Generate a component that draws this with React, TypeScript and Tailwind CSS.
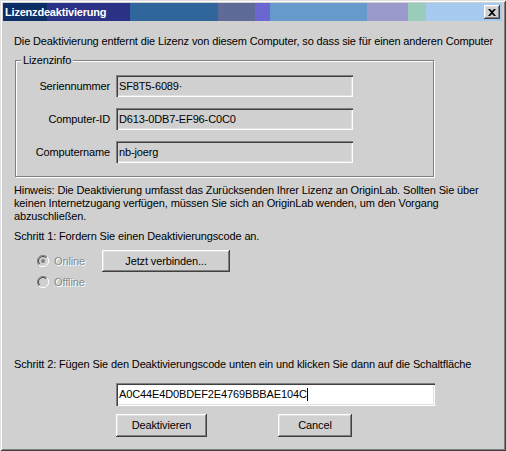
import React from 'react';

const face = 'bg-[#d0d0d0]';
const raised =
  'shadow-[inset_-1px_-1px_0_#404040,inset_1px_1px_0_#ffffff,inset_-2px_-2px_0_#808080,inset_2px_2px_0_#e0e0e0]';
const sunken =
  'shadow-[inset_1px_1px_0_#808080,inset_2px_2px_0_#404040,inset_-1px_-1px_0_#ffffff,inset_-2px_-2px_0_#e0e0e0]';

function Radio({ checked }: { checked?: boolean }) {
  return (
    <svg width="12" height="12" viewBox="0 0 12 12" className="shrink-0">
      <circle cx="6" cy="6" r="5.5" fill="#d0d0d0" />
      <path d="M10 2 A5.5 5.5 0 0 0 2 10" stroke="#808080" strokeWidth="1" fill="none" />
      <path d="M9.2 2.8 A4.5 4.5 0 0 0 2.8 9.2" stroke="#404040" strokeWidth="1" fill="none" />
      <path d="M2 10 A5.5 5.5 0 0 0 10 2" stroke="#ffffff" strokeWidth="1" fill="none" />
      {checked && <circle cx="6" cy="6" r="2" fill="#808080" />}
    </svg>
  );
}

function Field({ label, value }: { label: string; value: string }) {
  return (
    <div className="flex items-center h-[22px]">
      <div className="w-[94px] text-right">{label}</div>
      <div className={`ml-[6px] w-[237px] h-[22px] flex items-center pl-[3px] ${sunken}`}>{value}</div>
    </div>
  );
}

export default function App() {
  return (
    <div
      className={`w-[506px] h-[451px] ${face} pl-[3px] pt-[3px] pr-[4px] pb-[3px] flex flex-col text-[11px] leading-[13px] tracking-[-0.13px] text-black shadow-[inset_1px_1px_0_#e0e0e0,inset_-1px_-1px_0_#404040,inset_2px_2px_0_#ffffff,inset_-2px_-2px_0_#808080]`}
      style={{ fontFamily: '"Liberation Sans", Arial, sans-serif' }}
    >
      {/* title bar */}
      <div className="h-[18px] shrink-0 flex items-center justify-between bg-[linear-gradient(to_right,#0d2d66_0_44px,#2b3184_44px_127px,#30669b_127px_215px,#5f6a98_215px_252px,#6a68d0_252px_267px,#6699cc_267px_364px,#9a99cb_364px_405px,#99ccbb_405px_423px,#a6caf0_423px)]">
        <span className="pl-[2px] text-white font-bold text-[11px] tracking-[-0.2px]">Lizenzdeaktivierung</span>
        <div className={`mr-[2px] w-[16px] h-[14px] ${face} ${raised} flex items-center justify-center`}>
          <svg width="8" height="7" viewBox="0 0 8 7">
            <path d="M0 0h2l2 2 2-2h2L5 3.5 8 7H6L4 5 2 7H0l3-3.5z" fill="#000" />
          </svg>
        </div>
      </div>

      <div className="ml-[11px] mt-[14px] w-[486px] whitespace-nowrap overflow-hidden">
        Die Deaktivierung entfernt die Lizenz von diesem Computer, so dass sie für einen anderen Computer
      </div>

      {/* group box */}
      <div className="relative ml-[12px] mt-[12px] w-[419px] h-[117px] border border-[#808080] shadow-[inset_1px_1px_0_#ffffff,1px_1px_0_#ffffff] pt-[14px] flex flex-col gap-[11px]">
        <span className={`absolute left-[5px] -top-[7px] px-[2px] ${face}`}>Lizenzinfo</span>
        <Field label="Seriennummer" value="SF8T5-6089·" />
        <Field label="Computer-ID" value="D613-0DB7-EF96-C0C0" />
        <Field label="Computername" value="nb-joerg" />
      </div>

      <div className="ml-[11px] mt-[7px]">
        Hinweis: Die Deaktivierung umfasst das Zurücksenden Ihrer Lizenz an OriginLab. Sollten Sie über
        <br />
        keinen Internetzugang verfügen, müssen Sie sich an OriginLab wenden, um den Vorgang
        <br />
        abzuschließen.
      </div>

      <div className="ml-[11px] mt-[7px]">Schritt 1: Fordern Sie einen Deaktivierungscode an.</div>

      <div className="mt-[7px] ml-[34px] h-[22px] flex items-center">
        <div className="w-[65px] flex items-center gap-[5px] text-[#8a8a8a] [text-shadow:1px_1px_0_#ffffff]">
          <Radio checked />
          <span>Online</span>
        </div>
        <div className={`w-[128px] h-[22px] flex items-center justify-center ${raised}`}>Jetzt verbinden...</div>
      </div>

      <div className="mt-[3px] ml-[34px] h-[14px] flex items-center gap-[5px] text-[#8a8a8a] [text-shadow:1px_1px_0_#ffffff]">
        <Radio />
        <span>Offline</span>
      </div>

      <div className="ml-[11px] mt-[69px]">
        Schritt 2: Fügen Sie den Deaktivierungscode unten ein und klicken Sie dann auf die Schaltfläche
      </div>

      <div className={`ml-[113px] mt-[12px] w-[319px] h-[23px] bg-white flex items-center pl-[3px] ${sunken}`}>
        <span>A0C44E4D0BDEF2E4769BBBAE104C</span>
        <span className="w-px h-[13px] bg-black" />
      </div>

      <div className="mt-[8px] flex">
        <div className={`ml-[113px] w-[91px] h-[23px] flex items-center justify-center ${raised}`}>Deaktivieren</div>
        <div className={`ml-[71px] w-[74px] h-[23px] flex items-center justify-center ${raised}`}>Cancel</div>
      </div>
    </div>
  );
}
